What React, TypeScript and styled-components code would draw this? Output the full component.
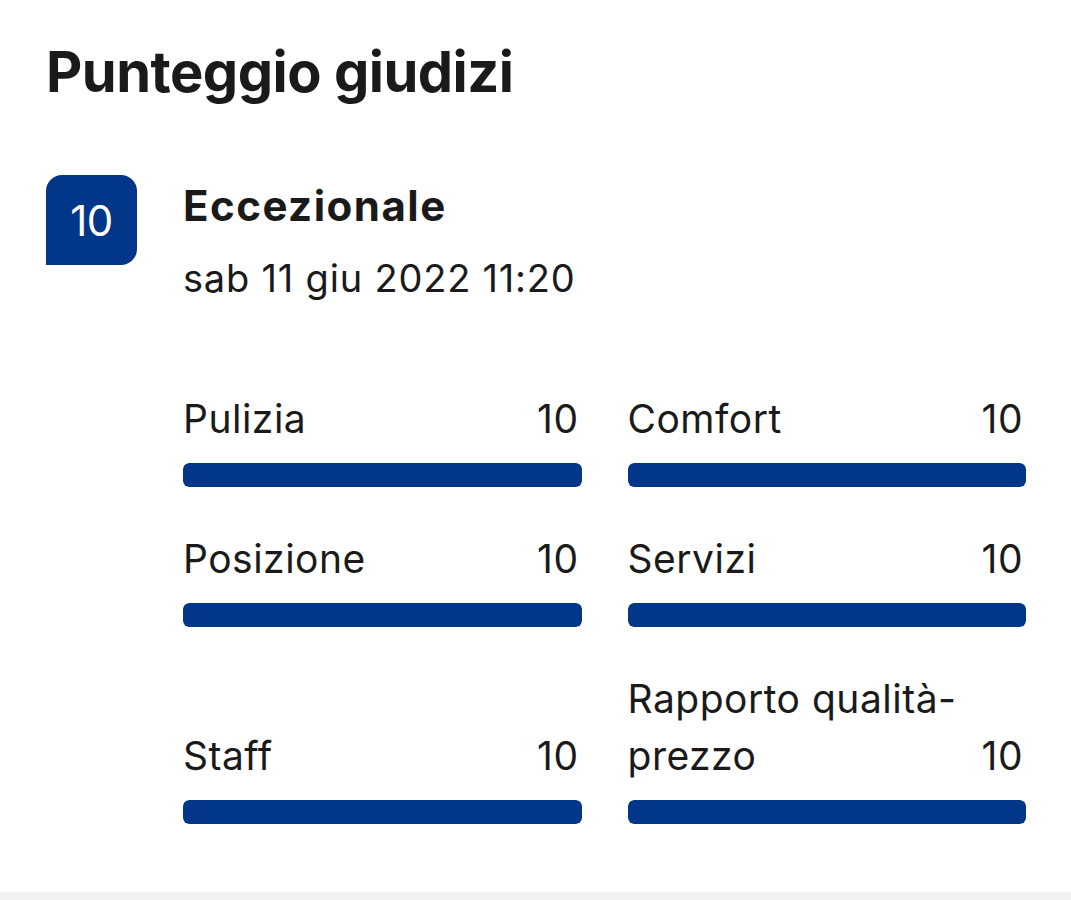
import React from "react";
import styled, { createGlobalStyle } from "styled-components";

const GlobalStyle = createGlobalStyle`
  html, body {
    margin: 0;
    padding: 0;
    background: #ffffff;
  }
  body {
    font-family: Inter, "Noto Sans", "Liberation Sans", sans-serif;
    color: #1a1a1a;
  }
`;

const Page = styled.div`
  min-height: 900px;
  display: flex;
  flex-direction: column;
  background: #ffffff;
`;

const Section = styled.section`
  padding: 38px 45px 68px 46px;
  display: flex;
  flex-direction: column;
`;

const Title = styled.h2`
  margin: 0;
  font-size: 56px;
  line-height: 68px;
  font-weight: 700;
  letter-spacing: -0.5px;
  color: #1a1a1a;
`;

const Review = styled.div`
  display: flex;
  align-items: flex-start;
  gap: 46px;
  margin-top: 69px;
`;

const Badge = styled.div`
  flex: 0 0 auto;
  width: 91px;
  height: 90px;
  background: #023688;
  color: #ffffff;
  border-radius: 16px 16px 16px 0;
  display: flex;
  align-items: center;
  justify-content: center;
  font-size: 42px;
  font-weight: 400;
  letter-spacing: -0.5px;
`;

const Info = styled.div`
  flex: 1;
  display: flex;
  flex-direction: column;
  padding-top: 8px;
`;

const Verdict = styled.div`
  font-size: 42px;
  line-height: 46px;
  font-weight: 700;
  letter-spacing: 1.5px;
`;

const DateLine = styled.div`
  margin-top: 26px;
  font-size: 38px;
  line-height: 46px;
  font-weight: 400;
  letter-spacing: 0.8px;
`;

const Grid = styled.div`
  margin-top: 89px;
  display: grid;
  grid-template-columns: 1fr 1fr;
  column-gap: 46px;
  row-gap: 43px;
`;

const Cell = styled.div`
  display: flex;
  flex-direction: column;
  justify-content: flex-end;
`;

const LabelRow = styled.div`
  display: flex;
  align-items: flex-end;
  justify-content: space-between;
  gap: 16px;
  font-size: 39px;
  line-height: 57px;
  letter-spacing: 0.5px;
`;

const Label = styled.span`
  max-width: 340px;
`;

const Score = styled.span`
  flex: 0 0 auto;
  padding-right: 3px;
`;

const Track = styled.div`
  margin-top: 16px;
  height: 24px;
  border-radius: 6px;
  background: #e6e6e6;
  overflow: hidden;
`;

const Fill = styled.div`
  height: 100%;
  background: #023688;
  border-radius: 6px;
`;

const Footer = styled.div`
  flex: 1;
  background: #f2f2f2;
`;

const categories = [
  { label: "Pulizia", score: 10 },
  { label: "Comfort", score: 10 },
  { label: "Posizione", score: 10 },
  { label: "Servizi", score: 10 },
  { label: "Staff", score: 10 },
  { label: "Rapporto qualità-prezzo", score: 10 },
];

export default function App() {
  return (
    <Page>
      <GlobalStyle />
      <Section>
        <Title>Punteggio giudizi</Title>
        <Review>
          <Badge>10</Badge>
          <Info>
            <Verdict>Eccezionale</Verdict>
            <DateLine>sab 11 giu 2022 11:20</DateLine>
            <Grid>
              {categories.map((c) => (
                <Cell key={c.label}>
                  <LabelRow>
                    <Label>{c.label}</Label>
                    <Score>{c.score}</Score>
                  </LabelRow>
                  <Track>
                    <Fill style={{ width: `${c.score * 10}%` }} />
                  </Track>
                </Cell>
              ))}
            </Grid>
          </Info>
        </Review>
      </Section>
      <Footer />
    </Page>
  );
}
